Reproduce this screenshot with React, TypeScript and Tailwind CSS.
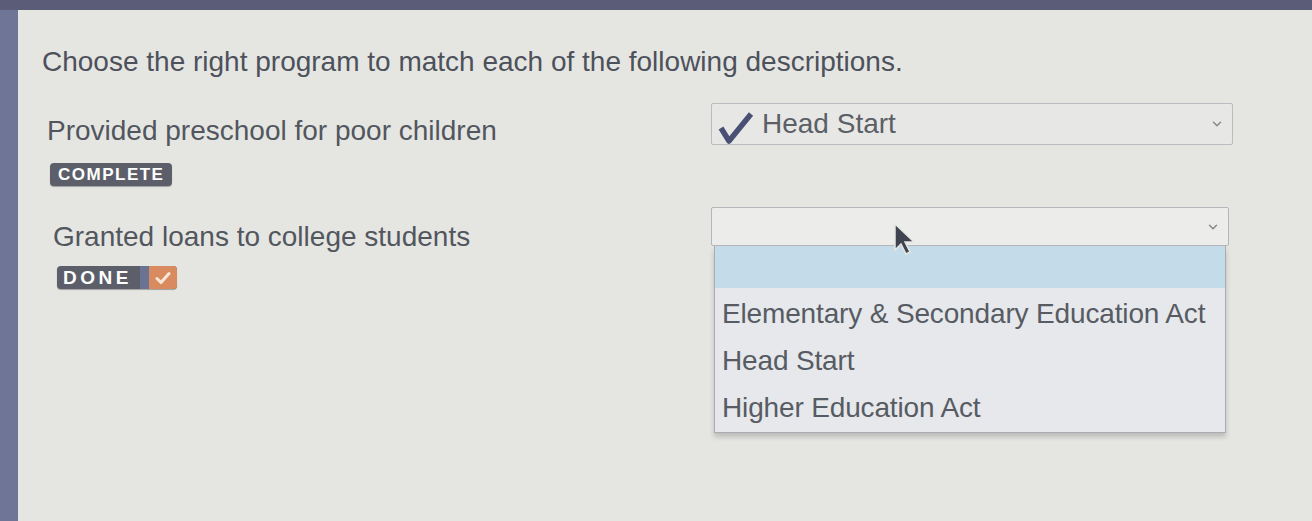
import { ChevronDown } from 'lucide-react';

const options = ['Elementary & Secondary Education Act', 'Head Start', 'Higher Education Act'];

function Badge({ label, check }: { label: string; check?: boolean }) {
  return (
    <div className="inline-flex items-stretch rounded-[4px] overflow-hidden bg-[#5c5f69] shadow-[0_1px_1px_rgba(0,0,0,0.3)]">
      <span
        className={
          check
            ? 'pl-[6px] pr-[8px] h-[23px] flex items-center text-white font-bold tracking-[3.5px] text-[19px] leading-none'
            : 'px-[8px] h-[23px] flex items-center text-white font-bold tracking-[1.5px] text-[17px] leading-none'
        }
      >
        {label}
      </span>
      {check && (
        <>
          <span className="w-[9px] bg-[#6a7391]" />
          <span className="w-[28px] flex items-center justify-center bg-[#d98b5f]">
            <svg width="16" height="14" viewBox="0 0 16 14" fill="none">
              <path d="M2 7.5l4 4L14 2.5" stroke="#f6e6d8" strokeWidth="3" strokeLinecap="round" strokeLinejoin="round" />
            </svg>
          </span>
        </>
      )}
    </div>
  );
}

export default function App() {
  return (
    <div className="w-[1312px] h-[521px] flex flex-col bg-[#e5e6e2] text-[#52565e] overflow-hidden font-['Liberation_Sans',Arial,sans-serif]">
      <div className="h-[10px] bg-[#5b5d78] shrink-0" />
      <div className="flex flex-1">
        <div className="w-[18px] bg-[#6f7597] shrink-0" />
        <div className="flex-1 pl-[24px] pt-[35px] relative">
          <h1 className="text-[28px] leading-[34px] text-[#4d515b]">
            Choose the right program to match each of the following descriptions.
          </h1>

          {/* first question: answered */}
          <div className="mt-[24px] grid grid-cols-[669px_522px]">
            <div className="pl-[5px]">
              <p className="text-[28px] leading-[34px] mt-[11px]">Provided preschool for poor children</p>
              <div className="mt-[15px] pl-[3px]">
                <Badge label="COMPLETE" />
              </div>
            </div>
            <div className="h-[42px] border border-[#b9bbbe] bg-[#e7e8e6] flex items-center pl-[6px] pr-[8px] rounded-[2px]">
              <svg width="36" height="32" viewBox="0 0 36 32" fill="none" className="mt-[8px]">
                <path d="M3 16l8 13L33 2" stroke="#4a5074" strokeWidth="5.5" strokeLinejoin="round" />
              </svg>
              <span className="ml-[8px] text-[28px] text-[#5b5f66]">Head Start</span>
              <ChevronDown className="ml-auto w-[14px] h-[14px] text-[#888]" strokeWidth={2.5} />
            </div>
          </div>

          {/* second question: list open */}
          <div className="mt-[20px] grid grid-cols-[669px_518px]">
            <div className="pl-[11px]">
              <p className="text-[28px] leading-[34px] mt-[13px]">Granted loans to college students</p>
              <div className="mt-[12px] pl-[4px]">
                <Badge label="DONE" check />
              </div>
            </div>
            <div className="flex flex-col">
              <div className="h-[39px] border border-[#b4b6b9] bg-[#ececeb] flex items-center justify-end pr-[8px] rounded-[2px]">
                <ChevronDown className="w-[14px] h-[14px] text-[#888]" strokeWidth={2.5} />
              </div>
              <div className="mx-[3px] border border-[#a9acb2] border-t-0 bg-[#e6e8eb] shadow-[0_4px_5px_rgba(0,0,0,0.18)]">
                <div className="h-[42px] bg-[#c4dcea]" />
                <div className="pt-[2px] pb-[1px]">
                  {options.map((o) => (
                    <div key={o} className="px-[7px] h-[47px] flex items-center text-[28px] tracking-[-0.15px] text-[#575b63]">
                      {o}
                    </div>
                  ))}
                </div>
              </div>
            </div>
          </div>

          {/* mouse pointer */}
          <svg className="absolute left-[875px] top-[212px]" width="26" height="34" viewBox="0 0 26 34">
            <path d="M2 2v26l6-6 5 10 4-2-5-10h9z" fill="#3f4350" stroke="#e5e6e2" strokeWidth="1.5" />
          </svg>
        </div>
      </div>
    </div>
  );
}
